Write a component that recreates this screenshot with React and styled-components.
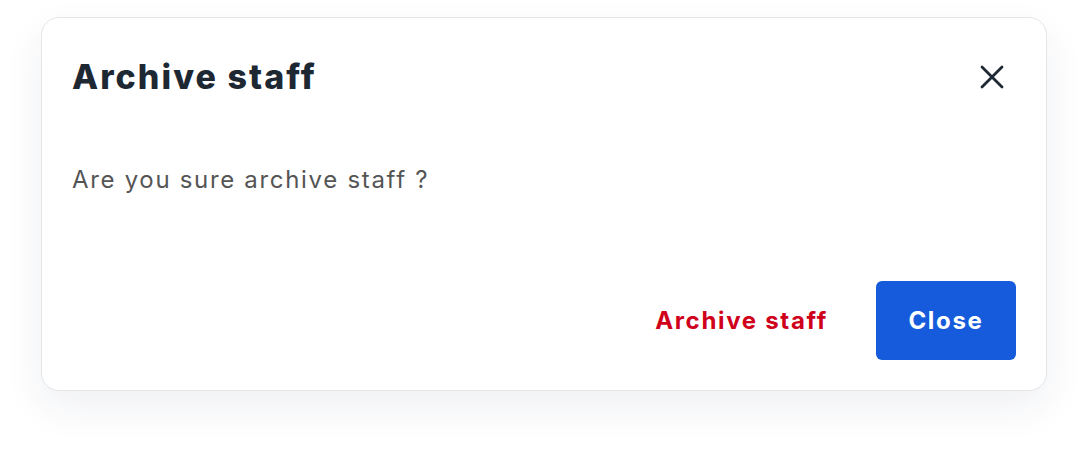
import React from "react";
import styled, { createGlobalStyle } from "styled-components";

const Global = createGlobalStyle`
  html, body { margin: 0; padding: 0; background: #ffffff; }
  body { font-family: Inter, "Noto Sans", sans-serif; -webkit-font-smoothing: antialiased; }
  * { box-sizing: border-box; }
`;

const Page = styled.div`
  padding: 17px 41px 0 41px;
  width: 1088px;
  height: 456px;
`;

const Card = styled.div`
  width: 1006px;
  height: 374px;
  background: #fff;
  border: 1px solid #e3e5e9;
  border-radius: 18px;
  box-shadow: 0 16px 40px rgba(30, 45, 80, 0.07);
  display: flex;
  flex-direction: column;
  padding: 39px 30px 30px 30px;
`;

const Header = styled.div`
  display: flex;
  align-items: center;
  justify-content: space-between;
`;

const Title = styled.h2`
  margin: 0;
  font-size: 34px;
  line-height: 40px;
  font-weight: 800;
  color: #1e2833;
  letter-spacing: 0.06em;
`;

const IconButton = styled.button`
  width: 24px;
  height: 24px;
  border: none;
  background: transparent;
  padding: 0;
  display: flex;
  align-items: center;
  justify-content: center;
  margin-right: 12px;
  cursor: pointer;
  color: #1e2833;
`;

const Message = styled.p`
  margin: 67px 0 0 0;
  font-size: 24px;
  line-height: 32px;
  color: #555555;
  letter-spacing: 0.07em;
`;

const Footer = styled.div`
  margin-top: auto;
  display: flex;
  justify-content: flex-end;
  align-items: center;
  gap: 48px;
`;

const Button = styled.button`
  font-family: Inter, "Noto Sans", sans-serif;
  font-size: 24px;
  font-weight: 700;
  letter-spacing: 0.07em;
  height: 79px;
  border-radius: 6px;
  border: none;
  cursor: pointer;
  padding: ${(p) => (p.$primary ? "0 30px" : "0")};
  min-width: ${(p) => (p.$primary ? "140px" : "0")};
  background: ${(p) => (p.$primary ? "#155bdb" : "transparent")};
  color: ${(p) => (p.$primary ? "#ffffff" : "#d0021b")};
`;

export default function App() {
  return (
    <>
      <Global />
      <Page>
        <Card>
          <Header>
            <Title>Archive staff</Title>
            <IconButton aria-label="Close">
              <svg width="24" height="24" viewBox="0 0 24 24" fill="none" stroke="currentColor" strokeWidth="2.8" strokeLinecap="round">
                <path d="M2 2l20 20M22 2L2 22" />
              </svg>
            </IconButton>
          </Header>
          <Message>Are you sure archive staff ?</Message>
          <Footer>
            <Button>Archive staff</Button>
            <Button $primary>Close</Button>
          </Footer>
        </Card>
      </Page>
    </>
  );
}
